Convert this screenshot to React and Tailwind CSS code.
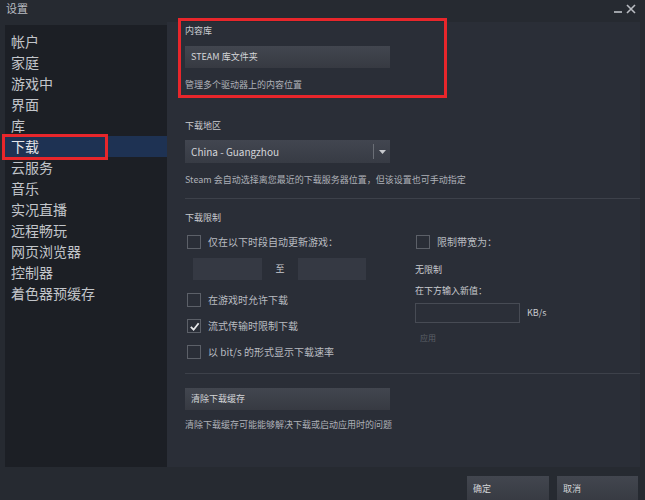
import React from "react";

const font = { fontFamily: '"Noto Sans CJK SC", "Noto Sans", sans-serif' };

const navItems = ["帐户", "家庭", "游戏中", "界面", "库", "下载", "云服务", "音乐", "实况直播", "远程畅玩", "网页浏览器", "控制器", "着色器预缓存"];

const Checkbox = ({ checked = false }) => (
  <div className="w-[14px] h-[14px] border border-[#5c6068] bg-[#2a2e37] flex items-center justify-center shrink-0">
    {checked && (
      <svg width="11" height="11" viewBox="0 0 12 12">
        <path d="M2 6.5 L5 9.5 L10.5 2.5" stroke="#e6e7e9" strokeWidth="2" fill="none" />
      </svg>
    )}
  </div>
);

const CheckRow = ({ label, checked, className = "" }) => (
  <div className={`flex items-center h-[14px] ${className}`}>
    <Checkbox checked={checked} />
    <span className="ml-[7px] text-[10px] leading-[14px] text-[#b9bcc1]">{label}</span>
  </div>
);

const Button = ({ label, className = "" }) => (
  <div className={`h-[22px] flex items-center px-[6px] bg-gradient-to-b from-[#42464f] to-[#373a42] text-[9px] text-[#d4d6d9] ${className}`}>
    {label}
  </div>
);

export default function App() {
  return (
    <div className="w-[645px] h-[500px] bg-[#262a31] relative overflow-hidden text-[#c3c6cb]" style={font}>
      {/* title bar */}
      <div className="h-[22px] flex items-center justify-between pl-[6px] pr-[9px]">
        <span className="text-[11px] text-[#b9bcc2] -mt-[6px]">设置</span>
        <div className="flex items-center gap-[4px] -mt-[4px]">
          <div className="w-[8px] h-[2px] bg-[#9ea2a8] mt-[5px]" />
          <svg width="10" height="10" viewBox="0 0 10 10">
            <path d="M1 1 L9 9 M9 1 L1 9" stroke="#b9bcc2" strokeWidth="1.6" />
          </svg>
        </div>
      </div>

      {/* body */}
      <div className="flex h-[445px] pl-[5px] pr-[5px]">
        {/* sidebar */}
        <div className="w-[162px] mt-[3px] bg-[#1c1f25] pt-[6px]">
          {navItems.map((item) => (
            <div
              key={item}
              className={`h-[21px] flex items-center pl-[6px] text-[14px] ${item === "下载" ? "bg-[#1e3253] text-[#e4e6ea]" : "text-[#c2c5ca]"}`}
            >
              {item}
            </div>
          ))}
        </div>

        {/* main panel */}
        <div className="flex-1 bg-[#2a2e37] pl-[18px] pr-0">
          <div className="mt-[2px] h-[14px] leading-[14px] text-[9px] text-[#c9cbcf]">内容库</div>
          <Button label="STEAM 库文件夹" className="mt-[8px] w-[205px]" />
          <div className="mt-[10px] h-[14px] leading-[14px] text-[9px] text-[#aeb1b7]">管理多个驱动器上的内容位置</div>

          <div className="mt-[27px] h-[14px] leading-[14px] text-[9px] text-[#c9cbcf]">下载地区</div>
          <div className="mt-[7px] w-[205px] h-[23px] flex items-center bg-gradient-to-b from-[#424650] to-[#373b44]">
            <span className="flex-1 pl-[6px] text-[10px] text-[#d4d6d9]">China - Guangzhou</span>
            <div className="w-px h-[15px] bg-[#6a6e76]" />
            <div className="w-[16px] flex justify-center">
              <svg width="7" height="4" viewBox="0 0 7 4"><path d="M0 0 L7 0 L3.5 4 Z" fill="#c7c9cd" /></svg>
            </div>
          </div>
          <div className="mt-[10px] h-[14px] leading-[14px] text-[9px] text-[#aeb1b7] whitespace-nowrap">Steam 会自动选择离您最近的下载服务器位置，但该设置也可手动指定</div>
          <div className="mt-[11px] h-px bg-[#3d414a]" />

          <div className="mt-[12px] h-[14px] leading-[14px] text-[9px] text-[#c9cbcf]">下载限制</div>
          <div className="flex">
            <div className="w-[230px] pl-[2px]">
              <CheckRow label="仅在以下时段自动更新游戏：" className="mt-[10px]" />
              <div className="mt-[9px] flex items-center pl-[6px]">
                <div className="w-[69px] h-[22px] bg-[#353943]" />
                <span className="w-[36px] text-center text-[9px] text-[#c9cbcf]">至</span>
                <div className="w-[68px] h-[22px] bg-[#353943]" />
              </div>
              <CheckRow label="在游戏时允许下载" className="mt-[13px]" />
              <CheckRow label="流式传输时限制下载" checked className="mt-[12px]" />
              <CheckRow label="以 bit/s 的形式显示下载速率" className="mt-[12px]" />
            </div>
            <div className="flex-1">
              <CheckRow label="限制带宽为：" className="mt-[10px] ml-[1px]" />
              <div className="mt-[14px] h-[14px] leading-[14px] text-[9px] text-[#c9cbcf]">无限制</div>
              <div className="mt-[7px] h-[14px] leading-[14px] text-[9px] text-[#c9cbcf]">在下方输入新值：</div>
              <div className="mt-[5px] flex items-center">
                <div className="w-[105px] h-[20px] border border-[#474b54] bg-[#2b2f38]" />
                <span className="ml-[7px] text-[9px] text-[#c9cbcf]">KB/s</span>
              </div>
              <div className="mt-[8px] ml-[5px] h-[14px] leading-[14px] text-[8px] text-[#5d6168]">应用</div>
            </div>
          </div>
          <div className="mt-[14px] h-px bg-[#3d414a]" />

          <Button label="清除下载缓存" className="mt-[14px] w-[205px]" />
          <div className="mt-[8px] h-[14px] leading-[14px] text-[9px] text-[#aeb1b7]">清除下载缓存可能能够解决下载或启动应用时的问题</div>
        </div>
      </div>

      {/* footer */}
      <div className="flex justify-end gap-[8px] pr-[7px] pt-[9px]">
        <Button label="确定" className="w-[82px] h-[26px] text-[9px]" />
        <Button label="取消" className="w-[81px] h-[26px] text-[9px]" />
      </div>

      {/* annotation boxes */}
      <div className="absolute left-[178px] top-[18px] w-[269px] h-[80px] border-[3px] border-[#e8262b]" />
      <div className="absolute left-[2px] top-[134px] w-[106px] h-[26px] border-[3px] border-[#e8262b]" />
    </div>
  );
}
